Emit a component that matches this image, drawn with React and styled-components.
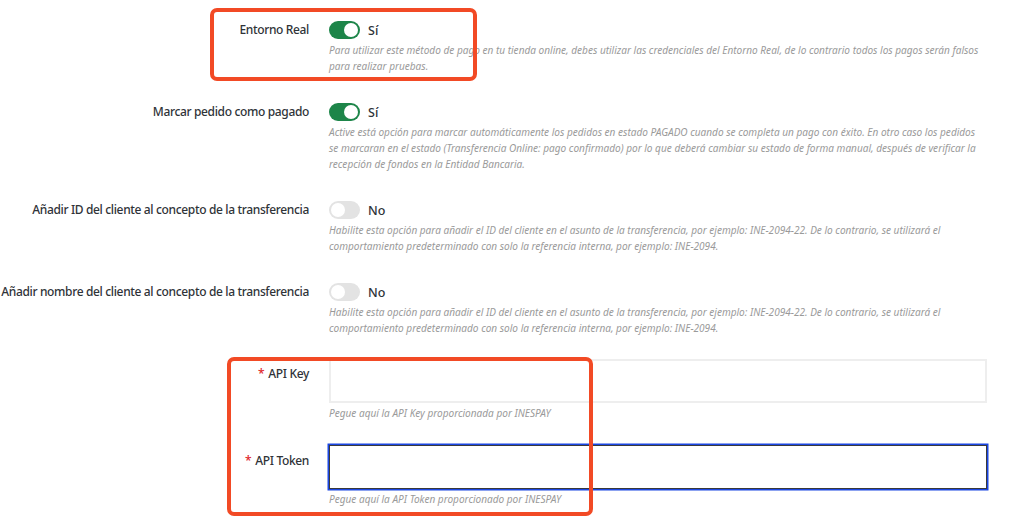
import React from "react";
import styled, { createGlobalStyle } from "styled-components";

const Global = createGlobalStyle`
  body {
    margin: 0;
    background: #ffffff;
    font-family: "Noto Sans", "Open Sans", sans-serif;
  }
`;

const Page = styled.div`
  position: relative;
  width: 1024px;
  height: 517px;
  overflow: hidden;
  padding-top: 21px;
  box-sizing: border-box;
`;

const Field = styled.div`
  display: grid;
  grid-template-columns: 309px 658px;
  column-gap: 20px;
  margin-bottom: ${(p) => p.gap || 29}px;
`;

const Label = styled.label`
  text-align: right;
  font-size: 12px;
  font-weight: 500;
  color: #2f3338;
  line-height: 18px;
  padding-top: ${(p) => p.top || 0}px;
  white-space: nowrap;
  letter-spacing: -0.35px;
`;

const Star = styled.span`
  color: #e0262b;
  margin-right: 4px;
`;

const Control = styled.div`
  display: flex;
  flex-direction: column;
`;

const SwitchRow = styled.div`
  display: flex;
  align-items: center;
  gap: 8px;
  height: 18px;
`;

const Track = styled.span`
  position: relative;
  width: 31px;
  height: 18px;
  border-radius: 9px;
  background: ${(p) => (p.on ? "#1d8549" : "#e3e3e3")};
  flex-shrink: 0;
`;

const Knob = styled.span`
  position: absolute;
  top: 2px;
  left: ${(p) => (p.on ? "15px" : "2px")};
  width: 14px;
  height: 14px;
  border-radius: 50%;
  background: #ffffff;
`;

const State = styled.span`
  font-size: 12.5px;
  font-weight: 500;
  color: #2f3338;
`;

const Help = styled.p`
  margin: ${(p) => p.top || 3}px 0 0;
  font-size: 10.05px;
  font-style: italic;
  line-height: 16px;
  color: #9a9a9a;
  white-space: nowrap;
`;

const Input = styled.input`
  box-sizing: border-box;
  width: 658px;
  height: 44px;
  margin: 0;
  padding: 0 10px;
  font: inherit;
  background: #fff;
  border: ${(p) => (p.focus ? "1px solid #3a3a3a" : "2px solid #eeeeee")};
  box-shadow: ${(p) => (p.focus ? "0 0 0 1.5px #1a46e2" : "none")};
  outline: none;
`;

const Mark = styled.div`
  position: absolute;
  box-sizing: border-box;
  border: 4px solid #f24a25;
  border-radius: 7px;
  pointer-events: none;
`;

function Toggle({ on }) {
  return (
    <SwitchRow>
      <Track on={on ? 1 : 0}>
        <Knob on={on ? 1 : 0} />
      </Track>
      <State>{on ? "Sí" : "No"}</State>
    </SwitchRow>
  );
}

const idHelp = [
  "Habilite esta opción para añadir el ID del cliente en el asunto de la transferencia, por ejemplo: INE-2094-22. De lo contrario, se utilizará el",
  "comportamiento predeterminado con solo la referencia interna, por ejemplo: INE-2094.",
];

export default function App() {
  return (
    <Page>
      <Global />
      <Field>
        <Label>Entorno Real</Label>
        <Control>
          <Toggle on />
          <Help>
            Para utilizar este método de pago en tu tienda online, debes utilizar las credenciales del Entorno Real, de lo contrario todos los pagos serán falsos
            <br />
            para realizar pruebas.
          </Help>
        </Control>
      </Field>
      <Field>
        <Label>Marcar pedido como pagado</Label>
        <Control>
          <Toggle on />
          <Help>
            Active está opción para marcar automáticamente los pedidos en estado PAGADO cuando se completa un pago con éxito. En otro caso los pedidos
            <br />
            se marcaran en el estado (Transferencia Online: pago confirmado) por lo que deberá cambiar su estado de forma manual, después de verificar la
            <br />
            recepción de fondos en la Entidad Bancaria.
          </Help>
        </Control>
      </Field>
      <Field>
        <Label>Añadir ID del cliente al concepto de la transferencia</Label>
        <Control>
          <Toggle />
          <Help>
            {idHelp[0]}
            <br />
            {idHelp[1]}
          </Help>
        </Control>
      </Field>
      <Field gap={23}>
        <Label>Añadir nombre del cliente al concepto de la transferencia</Label>
        <Control>
          <Toggle />
          <Help>
            {idHelp[0]}
            <br />
            {idHelp[1]}
          </Help>
        </Control>
      </Field>
      <Field gap={24}>
        <Label top={6}>
          <Star>*</Star>API Key
        </Label>
        <Control>
          <Input />
          <Help top={2}>Pegue aquí la API Key proporcionada por INESPAY</Help>
        </Control>
      </Field>
      <Field>
        <Label top={7}>
          <Star>*</Star>API Token
        </Label>
        <Control>
          <Input focus={1} />
          <Help top={2}>Pegue aquí la API Token proporcionado por INESPAY</Help>
        </Control>
      </Field>
      <Mark style={{ left: 210, top: 8, width: 267, height: 73 }} />
      <Mark style={{ left: 227, top: 357, width: 366, height: 159 }} />
    </Page>
  );
}
